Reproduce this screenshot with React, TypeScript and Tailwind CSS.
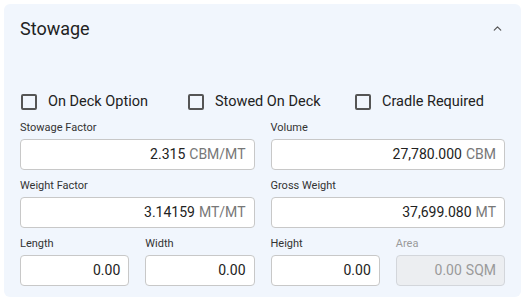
import { ChevronUp } from 'lucide-react'

const checks = ['On Deck Option', 'Stowed On Deck', 'Cradle Required']

function Field({
  label,
  value,
  unit,
  span,
  disabled,
}: {
  label: string
  value: string
  unit?: string
  span?: boolean
  disabled?: boolean
}) {
  return (
    <div className={span ? 'col-span-2' : ''}>
      <div className={`text-[11px] leading-[14px] mb-[4px] ${disabled ? 'text-[#9a9a9a]' : 'text-[#333]'}`}>
        {label}
      </div>
      <div
        className={`h-[31px] rounded-[4px] border flex items-center justify-end px-[8px] text-[14px] ${
          disabled ? 'bg-[#eceef1] border-[#d3d6db] text-[#9a9a9a]' : 'bg-white border-[#c8c8c8] text-[#222]'
        }`}
      >
        <span>{value}</span>
        {unit && <span className={`ml-[4px] ${disabled ? 'text-[#9a9a9a]' : 'text-[#777]'}`}>{unit}</span>}
      </div>
    </div>
  )
}

export default function App() {
  return (
    <div className="w-[526px] h-[303px] bg-white p-[4px] pr-[5px]" style={{ fontFamily: 'Roboto, sans-serif' }}>
      <div className="h-[293px] rounded-[6px] bg-[#f1f6fd] px-[16px] pt-[14px]">
        {/* Header */}
        <div className="flex items-center justify-between h-[20px]">
          <h2 className="text-[18px] font-normal text-[#222]">Stowage</h2>
          <ChevronUp className="w-[13px] h-[13px] text-[#555] mr-[1px]" strokeWidth={2.2} />
        </div>

        {/* Checkboxes */}
        <div className="grid grid-cols-3 gap-4 mt-[53px] h-[18px] items-center">
          {checks.map((c) => (
            <label key={c} className="flex items-center">
              <span className="w-[16px] h-[16px] ml-[1px] border-2 border-[#555] rounded-[2px] bg-transparent" />
              <span className="ml-[11px] text-[14.5px] text-[#222]">{c}</span>
            </label>
          ))}
        </div>

        {/* Fields */}
        <div className="grid grid-cols-4 gap-x-4 gap-y-[9px] mt-[12px]">
          <Field label="Stowage Factor" value="2.315" unit="CBM/MT" span />
          <Field label="Volume" value="27,780.000" unit="CBM" span />
          <Field label="Weight Factor" value="3.14159" unit="MT/MT" span />
          <Field label="Gross Weight" value="37,699.080" unit="MT" span />
          <Field label="Length" value="0.00" />
          <Field label="Width" value="0.00" />
          <Field label="Height" value="0.00" />
          <Field label="Area" value="0.00" unit="SQM" disabled />
        </div>
      </div>
    </div>
  )
}
